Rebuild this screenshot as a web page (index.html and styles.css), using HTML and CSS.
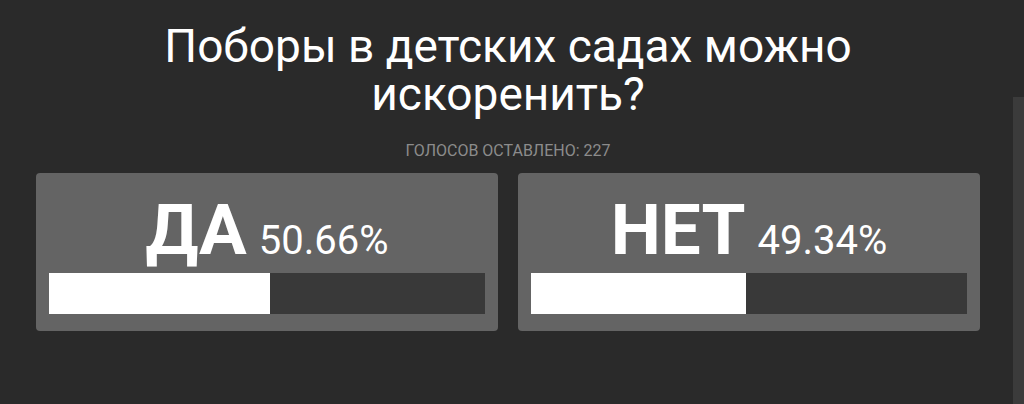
FILE: index.html
```html
<!DOCTYPE html>
<html lang="ru">
<head>
  <meta charset="UTF-8">
  <meta name="viewport" content="width=device-width, initial-scale=1.0">
  <title>Опрос</title>
  <link rel="stylesheet" href="styles.css">
</head>
<body>
  <div id="page">
    <div id="poll">
      <h1 id="question">Поборы в детских садах можно искоренить?</h1>
      <p id="votes">Голосов оставлено: 227</p>
      <div id="answers">
        <div class="answer">
          <div class="answer-head">
            <span class="answer-label">ДА</span>
            <span class="answer-percent">50.66%</span>
          </div>
          <div class="answer-bar"><div class="answer-fill" style="width: 50.66%"></div></div>
        </div>
        <div class="answer">
          <div class="answer-head">
            <span class="answer-label">НЕТ</span>
            <span class="answer-percent">49.34%</span>
          </div>
          <div class="answer-bar"><div class="answer-fill" style="width: 49.34%"></div></div>
        </div>
      </div>
    </div>
    <div id="sidePanel"></div>
  </div>
</body>
</html>
```

FILE: styles.css
```css
* {
  margin: 0;
  padding: 0;
  box-sizing: border-box;
}

body {
  font-family: 'Roboto', 'Liberation Sans', sans-serif;
  background-color: #2a2a2a;
  color: #fff;
  min-height: 100vh;
  overflow: hidden;
}

#page {
  display: flex;
  min-height: 100vh;
}

#poll {
  flex: 1;
  padding: 22px 33px 0 36px;
  text-align: center;
}

#question {
  font-size: 46px;
  font-weight: 400;
  line-height: 48px;
  max-width: 720px;
  margin: 0 auto;
}

#votes {
  margin-top: 23px;
  font-size: 16px;
  line-height: 19px;
  color: #8c8c8c;
  text-transform: uppercase;
}

#answers {
  margin-top: 13px;
  display: grid;
  grid-template-columns: 1fr 1fr;
  gap: 20px;
}

.answer {
  background-color: #646464;
  border-radius: 4px;
  padding: 14px 13px 17px;
}

.answer-head {
  display: flex;
  justify-content: center;
  align-items: baseline;
  gap: 12px;
  height: 86px;
}

.answer-label {
  font-size: 71px;
  font-weight: 700;
  line-height: 86px;
}

.answer-percent {
  font-size: 40px;
}

.answer-bar {
  height: 41px;
  background-color: #393939;
}

.answer-fill {
  height: 100%;
  background-color: #fff;
}

#sidePanel {
  width: 11px;
  margin-top: 97px;
  background-color: #3b3b3b;
}
```
